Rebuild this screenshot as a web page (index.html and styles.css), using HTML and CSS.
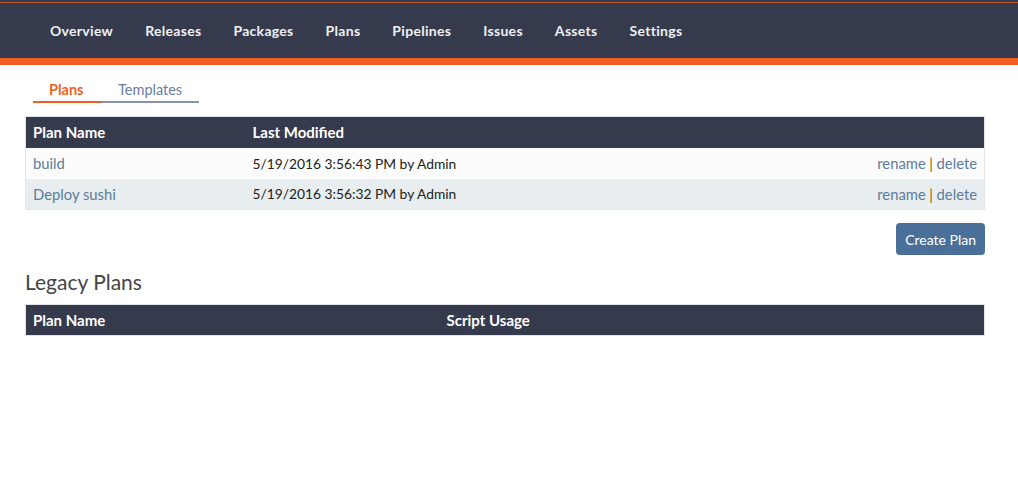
FILE: index.html
```html
<!DOCTYPE html>
<html>
<head>
<meta charset="utf-8">
<link rel="stylesheet" href="styles.css">
</head>
<body>
<header class="topbar">
  <nav class="nav">
    <a class="nav-item">Overview</a>
    <a class="nav-item">Releases</a>
    <a class="nav-item">Packages</a>
    <a class="nav-item">Plans</a>
    <a class="nav-item">Pipelines</a>
    <a class="nav-item">Issues</a>
    <a class="nav-item">Assets</a>
    <a class="nav-item">Settings</a>
  </nav>
</header>
<main class="content">
  <div class="tabs">
    <a class="tab active">Plans</a>
    <a class="tab">Templates</a>
  </div>
  <table class="grid">
    <thead>
      <tr><th class="col-name">Plan Name</th><th>Last Modified</th><th></th></tr>
    </thead>
    <tbody>
      <tr><td><a class="link">build</a></td><td>5/19/2016 3:56:43 PM by Admin</td><td class="actions"><a class="link">rename</a> <span class="sep">|</span> <a class="link">delete</a></td></tr>
      <tr class="alt"><td><a class="link">Deploy sushi</a></td><td>5/19/2016 3:56:32 PM by Admin</td><td class="actions"><a class="link">rename</a> <span class="sep">|</span> <a class="link">delete</a></td></tr>
    </tbody>
  </table>
  <div class="button-row">
    <button class="btn">Create Plan</button>
  </div>
  <h2 class="section-title">Legacy Plans</h2>
  <table class="grid">
    <thead>
      <tr><th class="col-legacy">Plan Name</th><th>Script Usage</th></tr>
    </thead>
  </table>
</main>
</body>
</html>
```
FILE: styles.css
```css
* { box-sizing: border-box; }
body {
  margin: 0;
  font-family: Lato, "Open Sans", sans-serif;
  font-size: 14px;
  color: #222;
  background: #fff;
}
.topbar {
  background: #363a4d;
  border-top: 2px solid #363a4d;
  border-bottom: 7px solid #f15f25;
  height: 65px;
}
.topbar::before {
  content: "";
  display: block;
  height: 1px;
  background: #c1532f;
}
.nav {
  display: flex;
  padding-left: 50px;
  gap: 32px;
  height: 55px;
  align-items: center;
}
.nav-item {
  color: #eef0f3;
  font-weight: 700;
  font-size: 14px;
  letter-spacing: 0.3px;
}
.content {
  padding: 0 33px 0 25px;
}
.tabs {
  display: flex;
  margin: 16px 0 13px 8px;
}
.tab {
  font-size: 14.5px;
  padding: 0 0 3px 16px;
  border-bottom: 2px solid #8396ad;
  color: #6b7da3;
}
.tab.active {
  color: #f15f25;
  border-bottom-color: #f15f25;
  width: 69px;
  font-weight: 700;
}
.tab:not(.active) { width: 97px; }
.grid {
  width: 960px;
  border-collapse: collapse;
  border: 1px solid #e3e6e8;
}
.grid th {
  background: #363a4d;
  color: #fff;
  text-align: left;
  font-weight: 700;
  font-size: 15px;
  height: 31px;
  padding: 0 7px;
}
.grid td {
  height: 31px;
  padding: 0 7px;
  font-size: 13.8px;
  background: #fcfcfc;
}
.grid tr.alt td { background: #e8edef; }
.col-name { width: 220px; }
.col-legacy { width: 414px; }
.link { color: #5c7ca0; font-size: 14.8px; }
.actions { text-align: right; }
.sep { color: #a3520c; font-size: 14.8px; }
.button-row {
  display: flex;
  justify-content: flex-end;
  width: 960px;
  margin-top: 13px;
}
.btn {
  background: #4a6f99;
  color: #fff;
  border: none;
  border-radius: 4px;
  font-family: inherit;
  font-size: 14px;
  height: 32px;
  padding: 0 9px;
}
.section-title {
  font-size: 21px;
  font-weight: 400;
  color: #444;
  margin: 14px 0 10px 0;
}
```
